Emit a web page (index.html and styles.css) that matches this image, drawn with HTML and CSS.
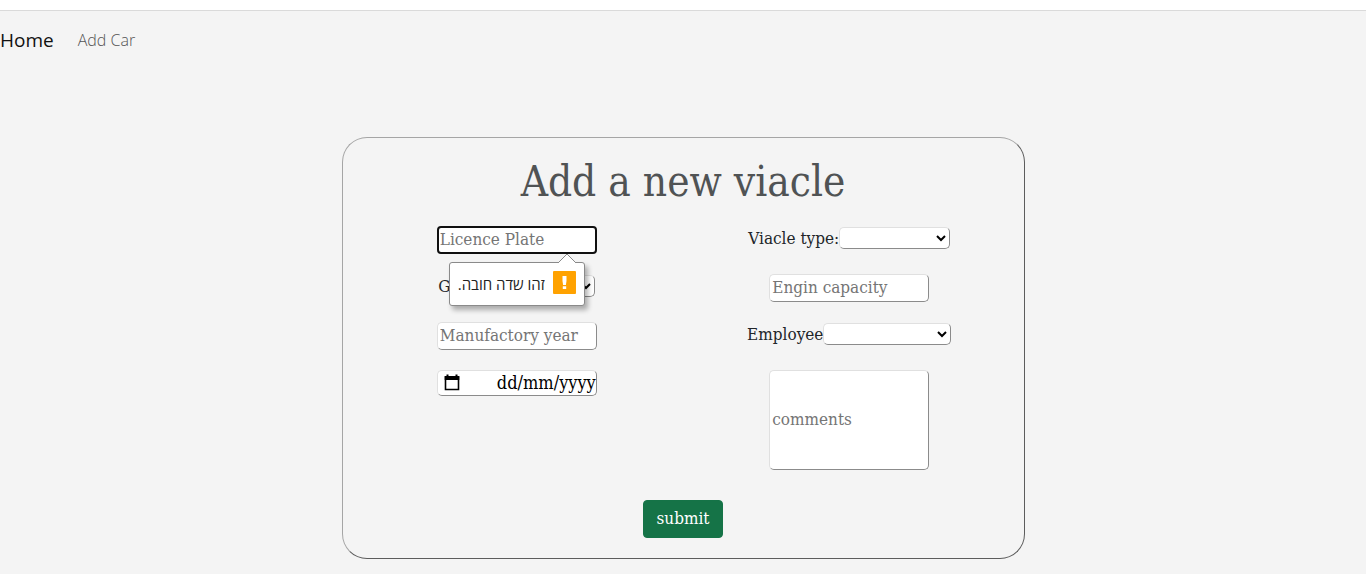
FILE: index.html
```html
<!DOCTYPE html>
<html lang="en">
<head>
<meta charset="utf-8">
<title>Add a new viacle</title>
<link rel="stylesheet" href="styles.css">
</head>
<body>
<header class="topbar">
  <nav class="nav">
    <a class="nav-brand" href="#">Home</a>
    <a class="nav-link" href="#">Add Car</a>
  </nav>
</header>
<main class="page">
  <form class="card">
    <h1 class="title">Add a new viacle</h1>
    <div class="fields">
      <div class="cell">
        <div class="anchor">
          <input class="control text" type="text" placeholder="Licence Plate" aria-label="Licence Plate" autofocus>
          <div class="bubble" role="alert" dir="rtl">
            <svg class="bubble-tip" width="18" height="10" viewBox="0 0 18 10" aria-hidden="true"><path d="M0 10 L9 1 L18 10" fill="#fff" stroke="#8a8a8a"/></svg>
            <svg width="23" height="23" viewBox="0 0 23 23" aria-hidden="true"><rect width="23" height="23" rx="1" fill="#ffa200"/><path d="M9.500 5h4v5l-.6 4h-2.800l-.6-4zM9.800 15.200h3.400v2.800H9.800z" fill="#fff"/></svg>
            <span class="bubble-text" lang="he">זהו שדה חובה.</span>
          </div>
        </div>
      </div>
      <div class="cell">
        <div class="pair"><label for="type">Viacle type:</label><select class="control select type" id="type"><option></option></select></div>
      </div>
      <div class="cell">
        <div class="pair gear"><label for="gear">G</label><select class="control select" id="gear"><option></option></select></div>
      </div>
      <div class="cell"><input class="control text" type="text" placeholder="Engin capacity" aria-label="Engin capacity"></div>
      <div class="cell"><input class="control text" type="text" placeholder="Manufactory year" aria-label="Manufactory year"></div>
      <div class="cell">
        <div class="pair"><label for="employee">Employee</label><select class="control select employee" id="employee"><option></option></select></div>
      </div>
      <div class="cell">
        <div class="control date">
          <button class="picker" type="button" aria-label="Open calendar"><svg width="16" height="18" viewBox="0 0 16 18" aria-hidden="true"><path d="M1.500 3h13v12.500h-13z" fill="none" stroke="#000" stroke-width="1.600"/><path d="M.7 2h14.600v4H.7zM2.500 .5h2v3h-2zM11.500 .5h2v3h-2z"/></svg></button>
          <input class="date-input" type="text" value="dd/mm/yyyy" aria-label="Date">
        </div>
      </div>
      <div class="cell"><input class="control text comments" type="text" placeholder="comments" aria-label="comments"></div>
    </div>
    <button class="submit" type="submit">submit</button>
  </form>
</main>
</body>
</html>
```
FILE: styles.css
```css
* { box-sizing: border-box; }
body {
  margin: 0;
  min-height: 100vh;
  border-top: 10px solid #fff;
  background: #f4f4f4;
  color: #212529;
  font: 17px/24px "DejaVu Serif Condensed", "DejaVu Serif", serif;
}
.topbar { border-top: 1px solid #dadada; padding: 14px 0; }
.nav { display: flex; align-items: center; gap: 24px; font-family: "Open Sans", sans-serif; }
.nav a { text-decoration: none; }
.nav-brand { color: #111; font-size: 19px; line-height: 30px; }
.nav-link { color: #555; font-size: 16px; font-weight: 300; }
.page { padding: 68px 0 15px; }
.card {
  width: 50%;
  margin: 0 auto;
  padding: 20px 8px;
  display: flex;
  flex-direction: column;
  align-items: center;
  border: 1px solid;
  border-color: #a5a5a5 #5c5c5c #5c5c5c #a5a5a5;
  border-radius: 25px;
}
.title { margin: 0 0 20px; color: #505354; font-size: 42px; line-height: 48px; font-weight: 400; }
.fields {
  align-self: stretch;
  display: grid;
  grid-template-columns: 1fr 1fr;
  grid-auto-rows: minmax(28px, auto);
  gap: 20px 0;
}
.cell { display: flex; justify-content: center; align-items: flex-start; }
.anchor { position: relative; display: flex; }
.control {
  margin: 0;
  background: #fff;
  border: 1px solid;
  border-color: #e0e0e0 #8b8b8b #8b8b8b #e0e0e0;
  border-radius: 5px;
  color: #000;
  font: inherit;
}
.text { width: 160px; height: 28px; padding: 0 2px 2px; }
.text::placeholder { color: #757575; opacity: 1; }
.text:focus { outline: none; border: 2px solid #101010; border-radius: 4px; padding: 0 1px 2px; }
.comments { height: 100px; }
.pair { display: flex; align-items: center; }
.select { height: 22px; font-size: 14px; line-height: 20px; }
.type { width: 111px; }
.employee { width: 128px; }
.gear { width: 157px; }
.gear .select { flex: 1; }
.date { width: 160px; height: 26px; display: flex; align-items: center; overflow: hidden; padding-left: 6px; }
.picker { display: flex; padding: 0; border: 0; background: none; }
.date-input { flex: 1; min-width: 0; padding: 0; border: 0; outline: 0; background: none; color: #000; font: inherit; font-size: 18px; text-align: right; }
.bubble {
  position: absolute;
  z-index: 1;
  top: 36px;
  left: 12px;
  height: 44px;
  width: 136px;
  padding: 8px;
  display: flex;
  align-items: flex-start;
  gap: 8px;
  background: #fff;
  border: 1px solid #8a8a8a;
  border-radius: 3px;
  box-shadow: 3px 4px 5px rgba(0, 0, 0, .3);
  color: #222;
  font: 15px/26px "Open Sans", "Liberation Sans", sans-serif;
  white-space: nowrap;
}
.bubble-tip { position: absolute; top: -10px; right: 8px; }
.submit {
  height: 38px;
  min-width: 80px;
  margin-top: 30px;
  padding: 0 12px 2px;
  border: 1px solid #157347;
  border-radius: 4px;
  background: #157347;
  color: #fff;
  font: inherit;
}
```
